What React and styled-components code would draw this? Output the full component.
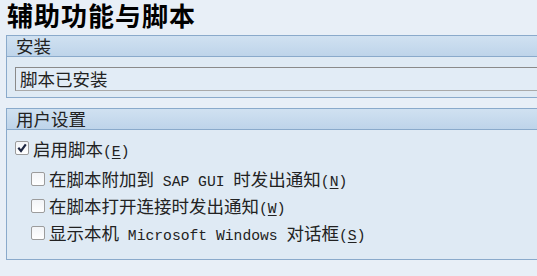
import React from 'react';
import styled, { createGlobalStyle } from 'styled-components';

const GlobalStyle = createGlobalStyle`
  html, body {
    margin: 0;
    padding: 0;
    background: #e8eff7;
    overflow: hidden;
  }
  body {
    font-family: "Noto Sans CJK SC", "Liberation Sans", sans-serif;
    color: #1a1a1a;
  }
`;

const Page = styled.div`
  width: 537px;
  height: 276px;
  background: #e8eff7;
`;

const Title = styled.h1`
  margin: 0;
  height: 35px;
  padding-left: 7px;
  font-size: 26px;
  line-height: 30px;
  font-weight: 700;
  color: #000;
  letter-spacing: 1px;
`;

const Group = styled.section`
  margin-left: 6px;
  margin-right: -4px;
  border: 1px solid #8aaacb;
  border-right: none;
  background: #dfeaf4;
  & + & {
    margin-top: 10px;
  }
`;

const GroupHeader = styled.div`
  height: 20px;
  padding-left: 9px;
  border-bottom: 1px solid #8aaacb;
  background: linear-gradient(#d0e1f1, #bed4ea);
  font-size: 17.5px;
  line-height: 20px;
  color: #222;
`;

const GroupBody = styled.div`
  padding: ${p => p.$padding};
`;

const Field = styled.div`
  height: 22px;
  border: 1px solid #a9a9a9;
  border-top-color: #8a8a8a;
  border-left-color: #8a8a8a;
  border-right: none;
  background: #e2ecf6;
  padding-left: 4px;
  font-size: 17.5px;
  line-height: 22px;
  color: #222;
`;

const Option = styled.label`
  display: flex;
  align-items: center;
  gap: 4px;
  height: ${p => (p.$sub ? 27 : 24)}px;
  padding-left: ${p => (p.$sub ? 24 : 8)}px;
  font-size: 17.5px;
  color: #222;
  white-space: nowrap;
`;

const SubList = styled.div`
  margin-top: 5px;
`;

const Box = styled.span`
  flex: none;
  width: 12px;
  height: 12px;
  border: 1px solid #9c9c9c;
  border-radius: 2px;
  background: linear-gradient(#f2f4f7, #ffffff);
  display: flex;
  align-items: center;
  justify-content: center;
`;

const Latin = styled.span`
  font-family: "Liberation Mono", "DejaVu Sans Mono", monospace;
  font-size: 14.7px;
  white-space: pre;
`;

const Key = styled.u`
  text-underline-offset: 2px;
`;

const Check = () => (
  <svg width="10" height="10" viewBox="0 0 10 10">
    <path d="M1.3 4.8 L4 7.9 L8.8 1.4" fill="none" stroke="#1c2540" strokeWidth="2.2" />
  </svg>
);

const CheckOption = ({ checked, sub, children, hotkey }) => (
  <Option $sub={sub}>
    <Box>{checked && <Check />}</Box>
    <span>
      {children}
      <Latin>(<Key>{hotkey}</Key>)</Latin>
    </span>
  </Option>
);

export default function App() {
  return (
    <Page>
      <GlobalStyle />
      <Title>辅助功能与脚本</Title>
      <Group>
        <GroupHeader>安装</GroupHeader>
        <GroupBody $padding="10px 0 6px 8px">
          <Field>脚本已安装</Field>
        </GroupBody>
      </Group>
      <Group>
        <GroupHeader>用户设置</GroupHeader>
        <GroupBody $padding="6px 0 13px 0">
          <CheckOption checked hotkey="E">启用脚本</CheckOption>
          <SubList>
            <CheckOption sub hotkey="N">
              在脚本附加到<Latin> SAP GUI </Latin>时发出通知
            </CheckOption>
            <CheckOption sub hotkey="W">在脚本打开连接时发出通知</CheckOption>
            <CheckOption sub hotkey="S">
              显示本机<Latin> Microsoft Windows </Latin>对话框
            </CheckOption>
          </SubList>
        </GroupBody>
      </Group>
    </Page>
  );
}
